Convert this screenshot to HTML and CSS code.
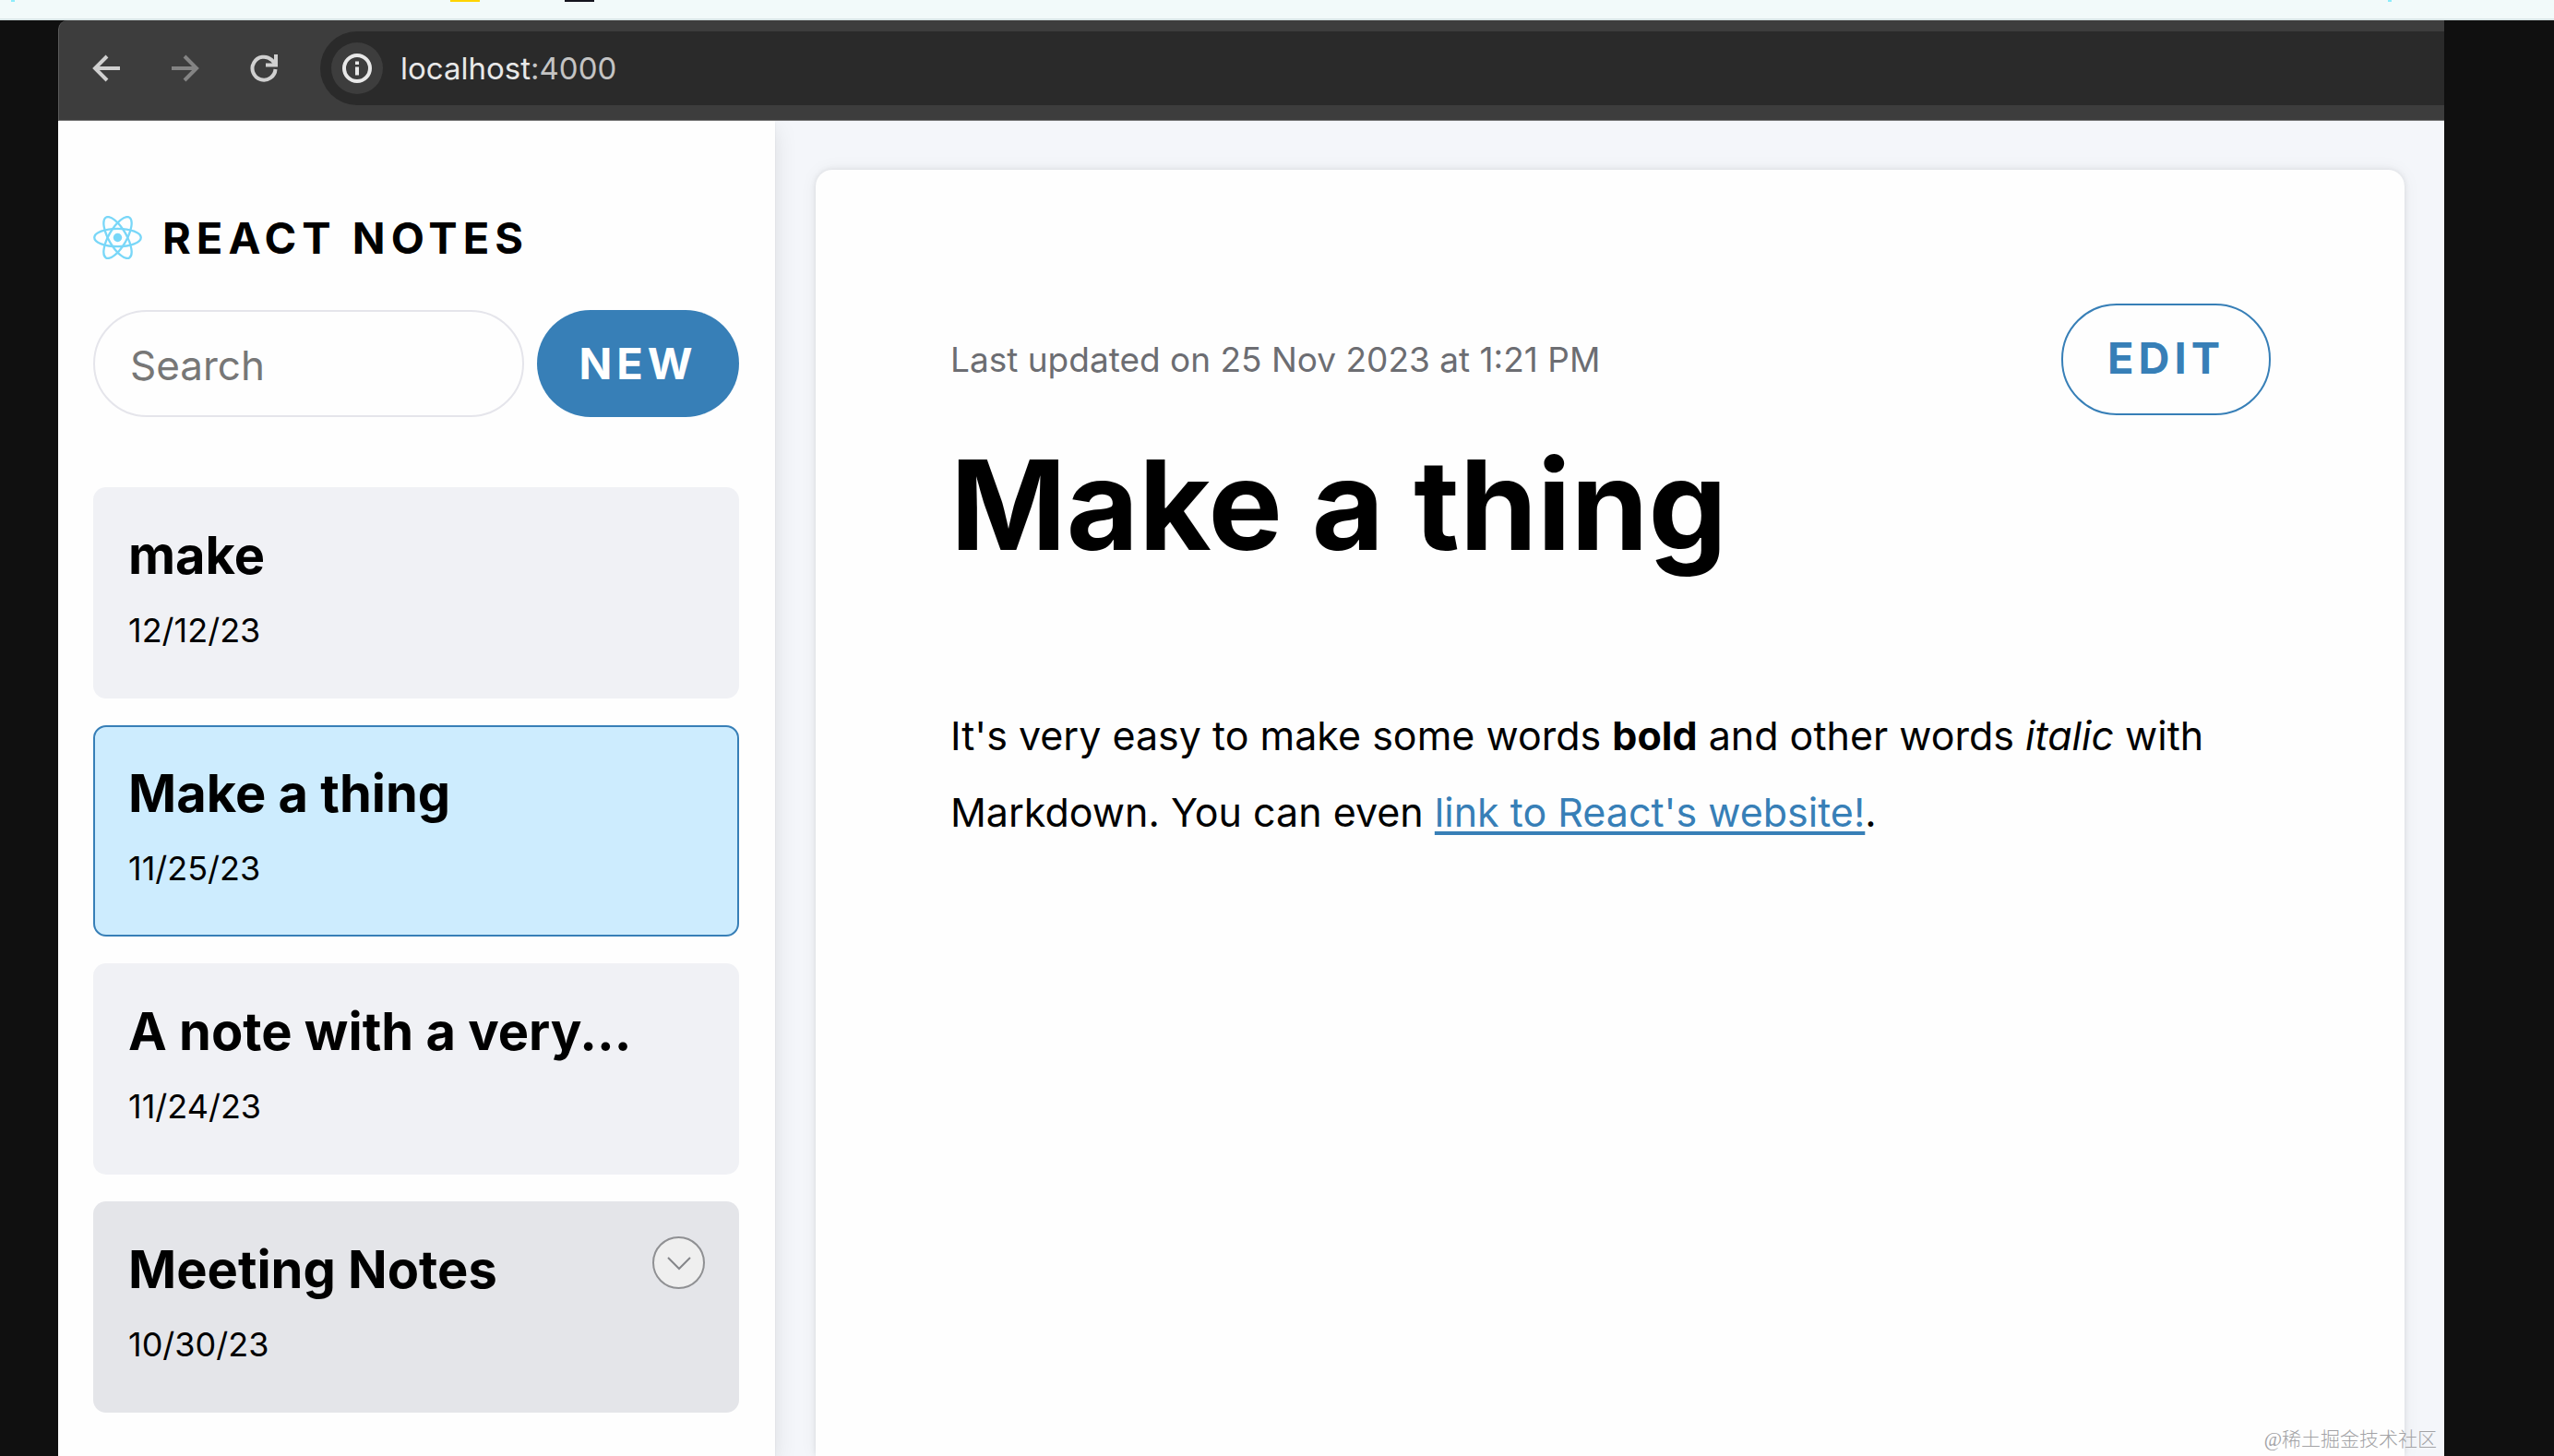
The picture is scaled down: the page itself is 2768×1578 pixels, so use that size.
FILE: index.html
```html
<!DOCTYPE html>
<html lang="en">
<head>
<meta charset="utf-8">
<title>React Notes</title>
<link rel="stylesheet" href="styles.css">
</head>
<body>
<div class="strip" aria-hidden="true">
  <i class="chip chip-cyan chip-first"></i>
  <i class="chip chip-yellow"></i>
  <i class="chip chip-black"></i>
  <i class="chip chip-cyan chip-last"></i>
</div>
<div class="desktop">
  <div class="window">
    <header class="toolbar">
      <button class="tool" type="button" aria-label="Back">
        <svg viewBox="0 0 32 32"><path d="M30 16H4M16 3L3 16l13 13"/></svg>
      </button>
      <button class="tool tool-off" type="button" aria-label="Forward">
        <svg viewBox="0 0 32 32"><path d="M1 16h26M15 3l13 13-13 13"/></svg>
      </button>
      <button class="tool" type="button" aria-label="Reload">
        <svg viewBox="0 0 32 32"><path d="M28.500 17A12.500 12.500 0 1 1 24.500 7L28 11"/><path d="M29 1v11.500H18"/></svg>
      </button>
      <div class="address">
        <button class="site-info" type="button" aria-label="Site information">
          <svg viewBox="0 0 32 32"><circle cx="16" cy="16" r="14"/><path d="M16 14.500v9M16 8.500v3.500"/></svg>
        </button>
        <span class="host">localhost<span class="port">:4000</span></span>
      </div>
    </header>
    <div class="app">
      <aside class="sidebar">
        <div class="brand">
          <svg class="logo" viewBox="-11.500 -10.232 23 20.463" aria-hidden="true">
            <circle r="2.050" fill="#79d7f8"/>
            <g fill="none" stroke="#79d7f8"><ellipse rx="11" ry="4.200"/><ellipse rx="11" ry="4.200" transform="rotate(60)"/><ellipse rx="11" ry="4.200" transform="rotate(120)"/></g>
          </svg>
          <strong>REACT NOTES</strong>
        </div>
        <div class="menu">
          <input class="search" type="text" placeholder="Search" aria-label="Search">
          <button class="pill pill-solid" type="button">NEW</button>
        </div>
        <nav class="notes">
          <article class="note">
            <div class="note-text"><a class="note-title" href="#make">make</a><small>12/12/23</small></div>
          </article>
          <article class="note note-active">
            <div class="note-text"><a class="note-title" href="#thing">Make a thing</a><small>11/25/23</small></div>
          </article>
          <article class="note">
            <div class="note-text"><a class="note-title" href="#very">A note with a very...</a><small>11/24/23</small></div>
          </article>
          <article class="note note-hover">
            <div class="note-text"><a class="note-title" href="#meeting">Meeting Notes</a><small>10/30/23</small></div>
            <button class="expand" type="button" aria-label="Show more">
              <svg viewBox="0 0 26 16"><path d="M1 2l12 12L25 2"/></svg>
            </button>
          </article>
        </nav>
      </aside>
      <main class="main">
        <section class="paper">
          <div class="paper-head">
            <small class="updated">Last updated on 25 Nov 2023 at 1:21 PM</small>
            <button class="pill pill-outline" type="button">EDIT</button>
          </div>
          <h1>Make a thing</h1>
          <p>It's very easy to make some words <strong>bold</strong> and other words <em>italic</em> with Markdown. You can even <a href="#react">link to React's website!</a>.</p>
        </section>
      </main>
    </div>
  </div>
</div>
<div class="watermark" lang="zh">@稀土掘金技术社区</div>
</body>
</html>
```
FILE: styles.css
```css
* {
  box-sizing: border-box;
}

body {
  margin: 0;
  min-height: 100vh;
  display: flex;
  flex-direction: column;
  position: relative;
  font-family: Inter, "Liberation Sans", sans-serif;
  color: #000;
  background: #101010;
}

button {
  font: inherit;
  padding: 0;
  border: 0;
  cursor: pointer;
}

svg {
  display: block;
}

.strip {
  height: 22px;
  display: flex;
  background: #f2fafa;
  border-bottom: 2px solid #d9e5e6;
}

.chip {
  width: 32px;
  height: 2px;
}

.chip-cyan {
  width: 4px;
  background: #8cecfb;
}

.chip-first {
  margin-left: 12px;
}

.chip-yellow {
  margin-left: 472px;
  background: #ffd400;
}

.chip-black {
  margin-left: 92px;
  background: #14141e;
}

.chip-last {
  margin-left: auto;
  margin-right: 176px;
}

.desktop {
  flex: 1;
  display: flex;
  padding: 0 119px 0 63px;
}

.window {
  flex: 1;
  display: flex;
  flex-direction: column;
}

.toolbar {
  height: 109px;
  display: flex;
  align-items: center;
  padding: 0 0 4px 36px;
  background: #3d3d3d;
  border-left: 1px solid #5c5c5c;
  border-bottom: 1px solid #747474;
  border-top-left-radius: 10px;
}

.tool {
  width: 32px;
  height: 32px;
  margin-right: 53px;
  background: none;
  color: #d0d0d0;
}

.tool svg,
.site-info svg {
  width: 32px;
  height: 32px;
  fill: none;
  stroke: currentColor;
  stroke-width: 4;
}

.tool-off {
  color: #848484;
}

.address {
  flex: 1;
  height: 80px;
  margin-left: -8px;
  display: flex;
  align-items: center;
  gap: 19px;
  padding-left: 12px;
  background: #2a2a2a;
  border-radius: 40px 0 0 40px;
}

.site-info {
  width: 56px;
  height: 56px;
  display: grid;
  place-items: center;
  border-radius: 50%;
  background: #3d3d3d;
  color: #e8e8e8;
}

.host {
  font-size: 33px;
  color: #e8e8e8;
}

.port {
  color: #c4c4c4;
}

.app {
  flex: 1;
  display: flex;
  background: #f4f6fa;
}

.sidebar {
  width: 777px;
  padding: 102px 39px 40px 38px;
  background: #fefefe;
  box-shadow: 0 8px 24px rgba(0, 0, 0, 0.1), 0 2px 2px rgba(0, 0, 0, 0.08);
  clip-path: inset(0 -40px 0 0);
}

.brand {
  height: 48px;
  display: flex;
  align-items: center;
  gap: 22px;
  font-size: 47px;
  letter-spacing: 6px;
}

.logo {
  width: 53px;
  height: 47px;
}

.menu {
  display: flex;
  gap: 14px;
  height: 116px;
  margin-top: 55px;
}

.search {
  flex: 1;
  min-width: 0;
  padding: 4px 38px 0;
  border: 2px solid #e5e5eb;
  border-radius: 58px;
  background: #fefefe;
  font: inherit;
  font-size: 44px;
  outline: 0;
}

.search::placeholder {
  color: #777;
  opacity: 1;
}

.pill {
  border-radius: 60px;
  font-size: 47px;
  font-weight: 700;
  letter-spacing: 5px;
}

.pill-solid {
  width: 219px;
  padding-bottom: 2px;
  background: #377fb7;
  color: #fff;
}

.notes {
  display: grid;
  gap: 29px;
  margin-top: 76px;
}

.note {
  height: 229px;
  display: flex;
  justify-content: space-between;
  padding: 36px 35px 0 36px;
  border: 2px solid transparent;
  border-radius: 14px;
  background: #f0f1f5 border-box;
}

.note-active {
  border-color: #377fb7;
  background: #cdecfe;
}

.note-hover {
  background: #e4e5e9 border-box;
}

.note-text {
  display: flex;
  flex-direction: column;
  gap: 25px;
  padding-top: 4px;
}

.note-title {
  font-size: 56px;
  line-height: 64px;
  font-weight: 700;
  color: inherit;
  text-decoration: none;
}

.note small {
  font-size: 36px;
  line-height: 48px;
}

.expand {
  width: 57px;
  height: 57px;
  display: grid;
  place-items: center;
  border: 2px solid #8f9093;
  border-radius: 50%;
  background: #efefef;
}

.expand svg {
  width: 26px;
  height: 16px;
  fill: none;
  stroke: #85868a;
  stroke-width: 2;
}

.main {
  flex: 1;
  display: flex;
  padding: 53px 43px 0 44px;
}

.paper {
  flex: 1;
  padding: 145px 145px 0 146px;
  background: #fefefe;
  border-radius: 18px 18px 0 0;
  box-shadow: 0 0 6px rgba(0, 0, 0, 0.1), 0 0 20px rgba(0, 0, 0, 0.05);
}

.paper-head {
  display: flex;
  justify-content: space-between;
  align-items: center;
}

.updated {
  font-size: 37px;
  color: #6c6d72;
}

.pill-outline {
  width: 227px;
  height: 121px;
  padding-bottom: 4px;
  border: 2px solid #377fb7;
  background: none;
  color: #377fb7;
}

h1 {
  margin: 17px 0 0;
  font-size: 135px;
  line-height: 160px;
  font-weight: 700;
}

p {
  margin: 129px 0 0;
  font-size: 43px;
  line-height: 83px;
}

p a {
  color: #377fb7;
  text-decoration-thickness: 4px;
  text-underline-offset: 5px;
}

.watermark {
  position: absolute;
  right: 127px;
  bottom: 3px;
  font-family: "Liberation Serif", "Noto Sans CJK SC", serif;
  font-size: 21px;
  font-weight: 300;
  line-height: 30px;
  color: #a3a3a6;
}
```
